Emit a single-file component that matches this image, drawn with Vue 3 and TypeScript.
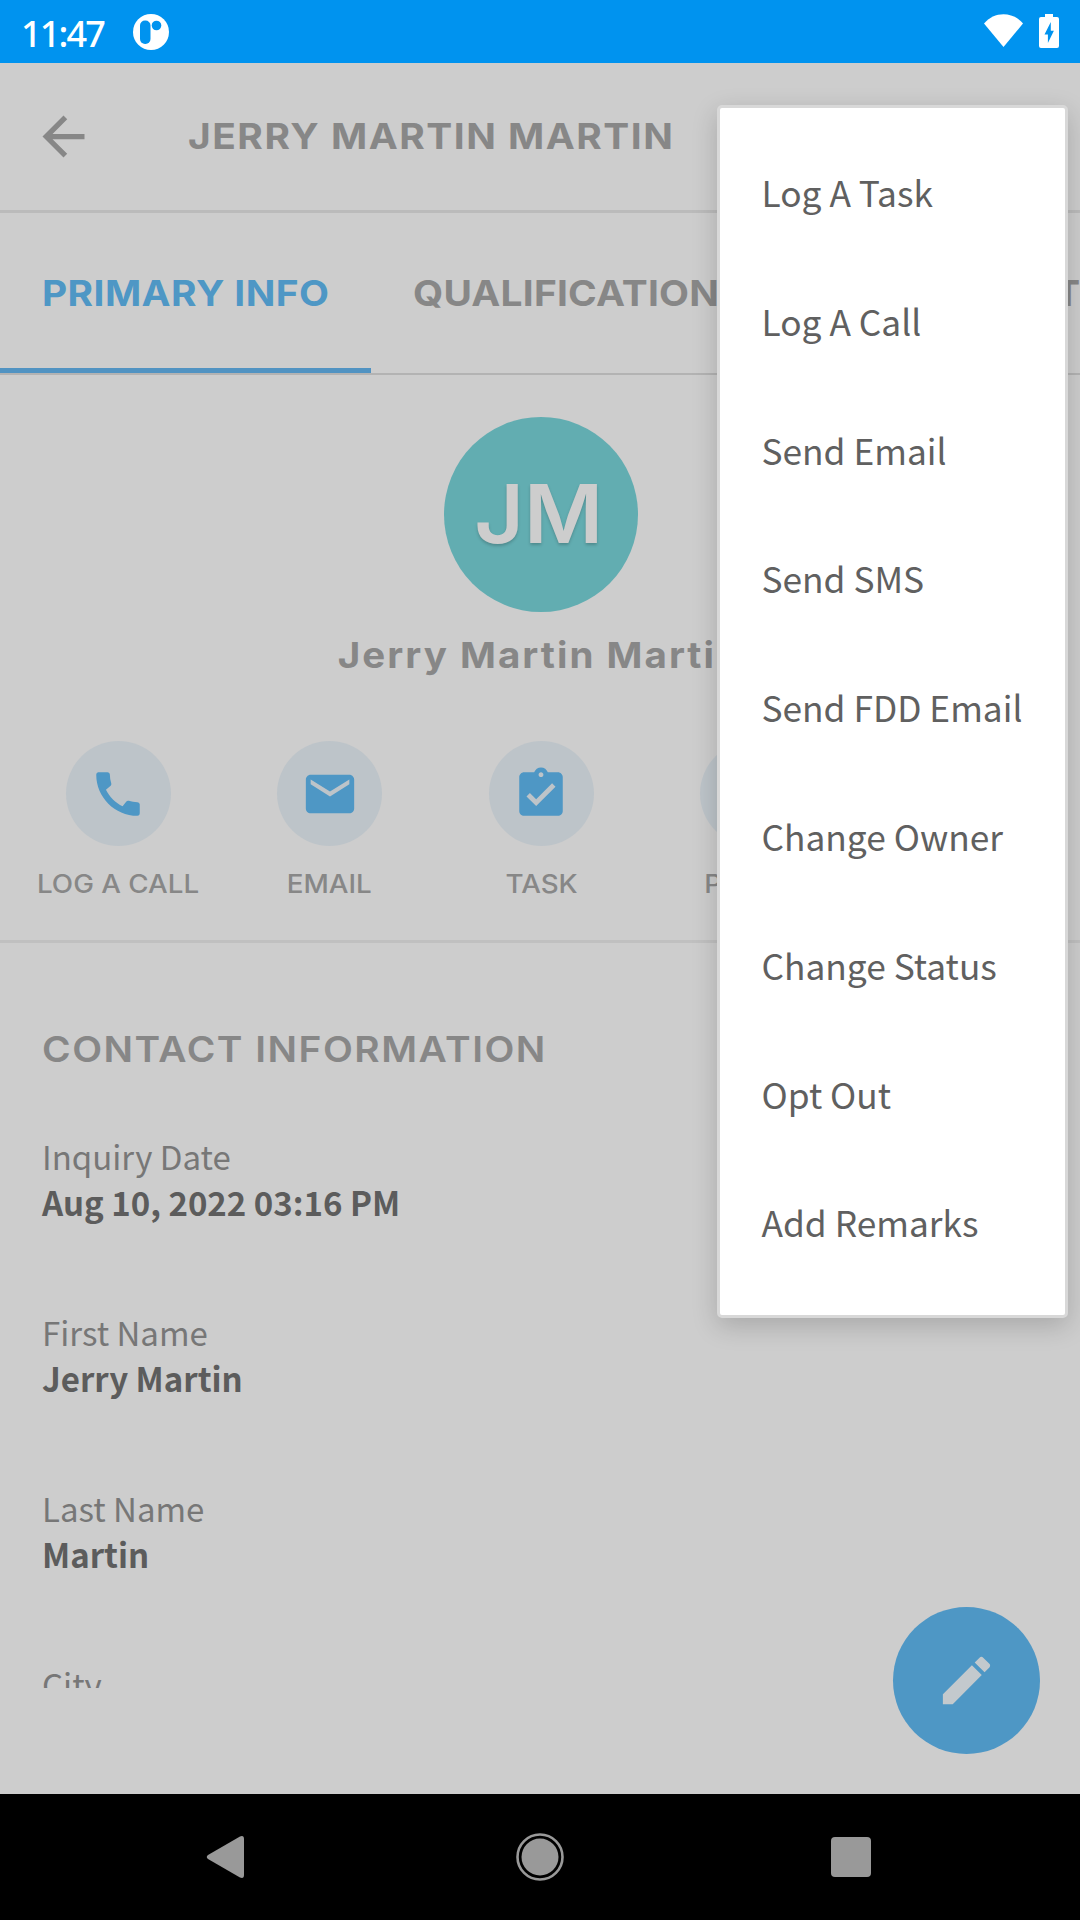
<script setup lang="ts">
interface Action {
  label: string
  icon: string
  kind: string
}

interface Field {
  label: string
  value: string
}

const actions: Action[] = [
  {
    label: 'LOG A CALL',
    kind: 'call',
    icon: 'M20.01 15.38c-1.23 0-2.42-.2-3.53-.56a.977.977 0 0 0-1.01.24l-1.57 1.97c-2.83-1.35-5.48-3.9-6.89-6.83l1.95-1.66c.27-.28.35-.67.24-1.02-.37-1.11-.56-2.3-.56-3.53 0-.54-.45-.99-.99-.99H4.19C3.65 3 3 3.24 3 3.99 3 13.28 10.73 21 20.01 21c.71 0 .99-.63.99-1.18v-3.45c0-.54-.45-.99-.99-.99z',
  },
  {
    label: 'EMAIL',
    kind: 'email',
    icon: 'M20 4H4c-1.1 0-1.99.9-1.99 2L2 18c0 1.1.9 2 2 2h16c1.1 0 2-.9 2-2V6c0-1.1-.9-2-2-2zm0 4l-8 5-8-5V6l8 5 8-5v2z',
  },
  {
    label: 'TASK',
    kind: 'task',
    icon: 'M19 3h-4.18C14.4 1.84 13.3 1 12 1c-1.3 0-2.4.84-2.82 2H5c-1.1 0-2 .9-2 2v14c0 1.1.9 2 2 2h14c1.1 0 2-.9 2-2V5c0-1.1-.9-2-2-2zm-7 0c.55 0 1 .45 1 1s-.45 1-1 1-1-.45-1-1 .45-1 1-1zm-2 14l-4-4 1.41-1.41L10 14.17l6.59-6.59L18 9l-8 8z',
  },
  { label: 'PHONE', kind: 'phone', icon: '' },
]

const fields: Field[] = [
  { label: 'Inquiry Date', value: 'Aug 10, 2022 03:16 PM' },
  { label: 'First Name', value: 'Jerry Martin' },
  { label: 'Last Name', value: 'Martin' },
  { label: 'City', value: '' },
]

const menu: string[] = [
  'Log A Task',
  'Log A Call',
  'Send Email',
  'Send SMS',
  'Send FDD Email',
  'Change Owner',
  'Change Status',
  'Opt Out',
  'Add Remarks',
]
</script>

<template>
  <div class="screen">
    <div class="status">
      <span class="time">11:47</span>
      <svg class="app-badge" viewBox="0 0 36 36">
        <circle cx="18" cy="18" r="18" fill="#fff" />
        <rect x="7" y="6.5" width="10.5" height="23.5" rx="5" fill="#0093ef" />
        <circle cx="23.5" cy="11.5" r="4.8" fill="#0093ef" />
      </svg>
      <svg class="wifi" viewBox="0 0 39 33">
        <path d="M0 9.5C10-3 29-3 39 9.5L19.500 33z" fill="#fff" />
      </svg>
      <svg class="battery" viewBox="0 0 20 34">
        <path d="M6 0h8v3h4q2 0 2 2v27q0 2-2 2H2q-2 0-2-2V5q0-2 2-2h4z" fill="#fff" />
        <path d="M11.8 8L5.5 20.5h3.4V29l6-12.2h-3.1z" fill="#0093ef" />
      </svg>
    </div>

    <header class="header">
      <svg class="back" viewBox="0 0 24 24">
        <path d="M20 11H7.83l5.59-5.59L12 4l-8 8 8 8 1.41-1.41L7.83 13H20v-2z" />
      </svg>
      <h1 class="title wide">JERRY MARTIN MARTIN</h1>
    </header>

    <nav class="tabs">
      <div class="tab active"><span class="wide">PRIMARY INFO</span></div>
      <div class="tab second"><span class="wide">QUALIFICATION</span></div>
      <div class="tab third"><span>T</span></div>
    </nav>

    <section class="profile">
      <div class="avatar"><span class="initials">JM</span></div>
      <h2 class="name">Jerry Martin Martin</h2>
      <div class="actions">
        <div v-for="a in actions" :key="a.kind" class="action">
          <div class="bubble">
            <svg v-if="a.icon" viewBox="0 0 24 24"><path :d="a.icon" /></svg>
          </div>
          <span class="caption">{{ a.label }}</span>
        </div>
      </div>
    </section>

    <section class="details">
      <h3 class="heading wide">CONTACT INFORMATION</h3>
      <div v-for="f in fields" :key="f.label" class="field">
        <div class="label">{{ f.label }}</div>
        <div class="value">{{ f.value }}</div>
      </div>
    </section>

    <div class="spacer"></div>

    <footer class="navbar">
      <svg viewBox="0 0 1080 126">
        <path d="M208 61L240 42.500Q244 41 244 45V81Q244 85 240 83.500L208 65Q205.500 63 208 61z" />
        <circle cx="540" cy="63" r="22.5" fill="none" stroke="#999" stroke-width="2.6" />
        <circle cx="540" cy="63" r="18.5" />
        <rect x="831" y="43" width="40" height="40" rx="4" />
      </svg>
    </footer>

    <button class="fab">
      <svg viewBox="0 0 24 24">
        <path d="M3 17.25V21h3.75L17.81 9.94l-3.75-3.75L3 17.25zM20.71 7.04c.39-.39.39-1.02 0-1.41l-2.34-2.34c-.39-.39-1.02-.39-1.41 0l-1.83 1.83 3.75 3.75 1.83-1.83z" />
      </svg>
    </button>

    <div class="menu">
      <div v-for="m in menu" :key="m" class="item">{{ m }}</div>
    </div>
  </div>
</template>

<style>
body {
  margin: 0;
  background: #cdcdcd;
}
</style>

<style scoped>
.screen {
  position: relative;
  width: 1080px;
  height: 1920px;
  display: flex;
  flex-direction: column;
  overflow: hidden;
  background: #cdcdcd;
  color: #878787;
  font-family: Inter, "Liberation Sans", sans-serif;
}
h1,
h2,
h3 {
  margin: 0;
}
.wide {
  display: inline-block;
  white-space: nowrap;
  transform: scaleX(1.08);
  transform-origin: left center;
}
.status {
  height: 63px;
  flex: none;
  box-sizing: border-box;
  display: flex;
  align-items: flex-start;
  padding: 0 21px;
  background: #0093ef;
  color: #fff;
}
.time {
  width: 112px;
  font: 500 36px/67px "Noto Sans", sans-serif;
  letter-spacing: -1.8px;
}
.app-badge {
  width: 36px;
  height: 36px;
  margin-top: 13.5px;
}
.wifi {
  width: 39px;
  height: 33px;
  margin: 14px 16px 0 auto;
}
.battery {
  width: 20px;
  height: 34px;
  margin-top: 14px;
}
.header {
  height: 147px;
  flex: none;
  display: flex;
  align-items: center;
  border-bottom: 3px solid #bbb;
}
.back {
  width: 63px;
  height: 63px;
  margin: 0 93px 0 32px;
  fill: #878787;
}
.title {
  margin-top: -1px;
  font-size: 36px;
  font-weight: 700;
  letter-spacing: 1.4px;
}
.tabs {
  height: 160px;
  flex: none;
  display: flex;
  border-bottom: 2px solid #b3b3b3;
  font-size: 36px;
  font-weight: 700;
  line-height: 160px;
  letter-spacing: 0.2px;
}
.tab {
  box-sizing: border-box;
  flex: none;
}
.tab.active {
  width: 371px;
  padding-left: 42px;
  color: #4e97c5;
  border-bottom: 5px solid #5193c2;
  letter-spacing: 0.4px;
}
.second {
  width: 685px;
  padding-left: 42px;
}
.profile {
  height: 565px;
  flex: none;
  display: flex;
  flex-direction: column;
  align-items: center;
  border-bottom: 3px solid #c0c0c0;
}
.avatar {
  width: 194px;
  height: 195px;
  margin: 42px 0 0 2px;
  border-radius: 50%;
  background: #62adb1;
  color: #cdcdcd;
  font-size: 81px;
  font-weight: 600;
  line-height: 195px;
  text-align: center;
  text-shadow: 0 2px 3px rgba(0, 0, 0, 0.2);
}
.initials {
  display: inline-block;
  margin-left: -4px;
  font-weight: 560;
  transform: scaleX(1.06);
}
.name {
  height: 86px;
  font-size: 36px;
  font-weight: 700;
  line-height: 86px;
  letter-spacing: 1.9px;
  transform: scaleX(1.07);
}
.actions {
  align-self: flex-start;
  display: flex;
  margin: 43px 0 0 12.5px;
}
.action {
  width: 211.5px;
  display: flex;
  flex-direction: column;
  align-items: center;
}
.bubble {
  width: 105px;
  height: 105px;
  border-radius: 50%;
  display: flex;
  align-items: center;
  justify-content: center;
  background: #bdc4c9;
}
.bubble svg {
  width: 58px;
  height: 58px;
  fill: #4e97c5;
}
.caption {
  margin-top: 23px;
  font-size: 25px;
  font-weight: 550;
  line-height: 30px;
  white-space: nowrap;
  transform: scaleX(1.11);
}
.details {
  height: 745px;
  flex: none;
  overflow: hidden;
  padding-left: 42px;
}
.heading {
  height: 40px;
  margin: 86px 0 64px;
  font-size: 36px;
  font-weight: 600;
  line-height: 40px;
  letter-spacing: 1.4px;
}
.field {
  height: 176px;
  font-family: "Noto Sans CJK SC", sans-serif;
  font-size: 33px;
  line-height: 46px;
}
.label {
  font-weight: 400;
  color: #777;
}
.value {
  font-weight: 700;
  color: #5c5c5c;
}
.spacer {
  flex: 1;
}
.navbar {
  height: 126px;
  flex: none;
  background: #000;
}
.navbar svg {
  display: block;
  width: 1080px;
  height: 126px;
  fill: #999;
}
.fab {
  position: absolute;
  left: 893px;
  top: 1607px;
  width: 147px;
  height: 147px;
  padding: 0;
  border: 0;
  border-radius: 50%;
  display: flex;
  align-items: center;
  justify-content: center;
  background: #4e97c5;
}
.fab svg {
  width: 63px;
  height: 63px;
  fill: #c3c9cd;
}
.menu {
  position: absolute;
  left: 717px;
  top: 105px;
  width: 351px;
  height: 1213px;
  box-sizing: border-box;
  padding: 20px 0 0 41.5px;
  border: 3px solid #d8d8d8;
  border-radius: 5px;
  background: #fff;
  box-shadow: 0 8px 26px rgba(0, 0, 0, 0.18);
}
.item {
  height: 128.8px;
  color: #606060;
  font-family: "Noto Sans CJK SC", sans-serif;
  font-size: 35.3px;
  line-height: 128.8px;
  white-space: nowrap;
}
</style>
